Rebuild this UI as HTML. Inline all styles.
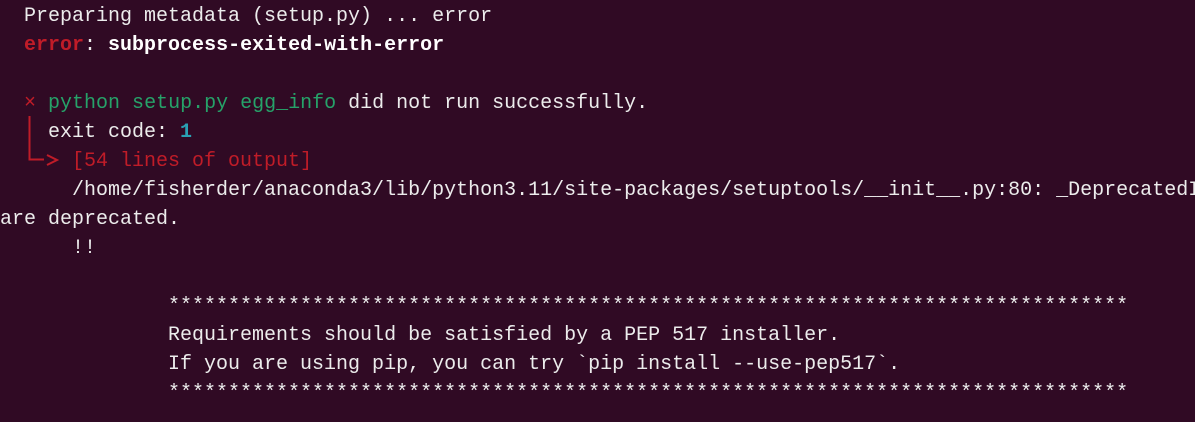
<!DOCTYPE html>
<html><head><style>
html,body{margin:0;padding:0;background:#300a24;width:1195px;height:422px;overflow:hidden}
pre{margin:0;padding:2px 0 0 0;font-family:"Liberation Mono","DejaVu Sans Mono",monospace;font-size:20px;line-height:29px;color:#ececec;white-space:pre;overflow:hidden;width:1195px}
.r{color:#c01c28}.g{color:#26a269}.c{color:#2aa1b3;font-weight:bold}.b{font-weight:bold;color:#fff}
svg{position:absolute;left:0;top:0}
</style></head><body>
<pre>  Preparing metadata (setup.py) ... error
  <span class="r b" style="color:#c01c28">error</span>: <span class="b">subprocess-exited-with-error</span>

  <span class="r">×</span> <span class="g">python setup.py egg_info</span> did not run successfully.
    exit code: <span class="c">1</span>
      <span class="r">[54 lines of output]</span>
      /home/fisherder/anaconda3/lib/python3.11/site-packages/setuptools/__init__.py:80: _DeprecatedI
are deprecated.
      !!

              ********************************************************************************
              Requirements should be satisfied by a PEP 517 installer.
              If you are using pip, you can try `pip install --use-pep517`.
              ********************************************************************************
</pre>
<svg width="1195" height="422"><path d="M29.5 116 V159.5 H44 M47 155 L57 160 L47 165" stroke="#c01c28" stroke-width="2" fill="none"/></svg>
</body></html>
